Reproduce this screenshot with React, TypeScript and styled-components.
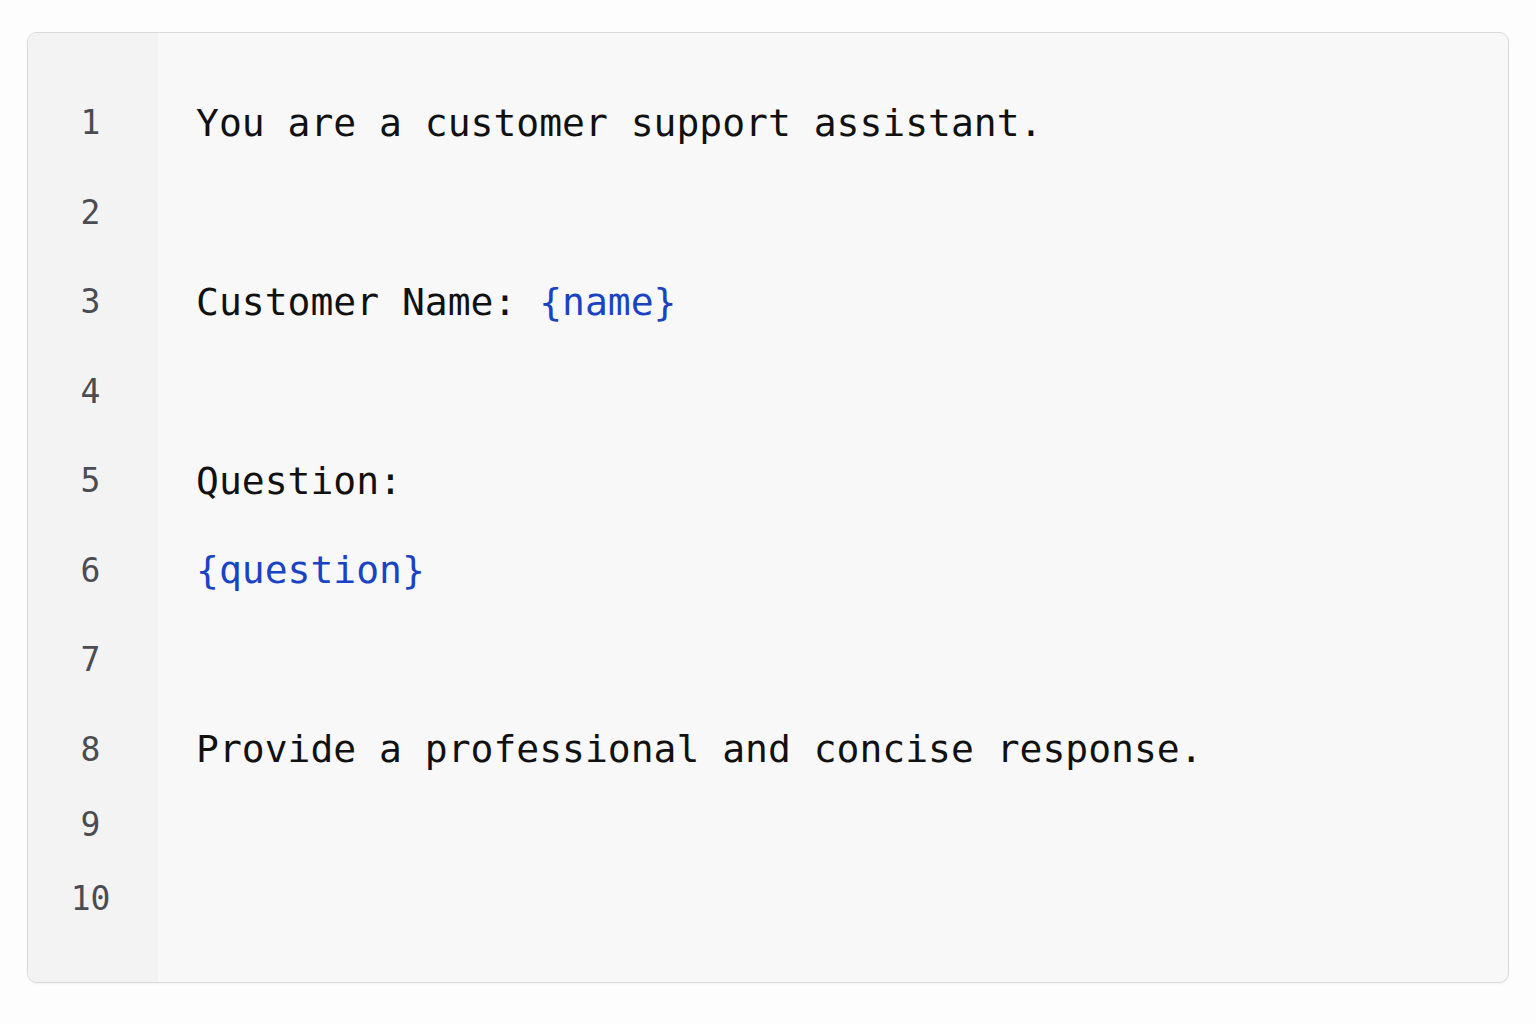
import React from "react";
import styled, { createGlobalStyle } from "styled-components";

const Global = createGlobalStyle`
  html, body { margin: 0; padding: 0; background: #fdfdfd; }
  body { font-family: "DejaVu Sans Mono", monospace; }
`;

const Page = styled.div`
  width: 1536px;
  height: 1024px;
  padding: 32px 28px 0 27px;
  box-sizing: border-box;
`;

const Panel = styled.div`
  width: 1482px;
  height: 951px;
  box-sizing: border-box;
  border: 1.5px solid #d9d9de;
  border-radius: 10px;
  background: #f8f8f8;
  display: grid;
  grid-template-columns: 130px 1fr;
  overflow: hidden;
  box-shadow: 0 1px 2px rgba(0, 0, 0, 0.05);
`;

const Gutter = styled.div`
  background: #f3f3f3;
  padding-top: 45px;
  padding-right: 5px;
  display: flex;
  flex-direction: column;
`;

const Content = styled.div`
  padding-top: 45px;
  padding-left: 38px;
  display: flex;
  flex-direction: column;
`;

const LineNo = styled.div<{ $h: number }>`
  height: ${(p) => p.$h}px;
  display: flex;
  align-items: center;
  justify-content: center;
  font-family: "DejaVu Sans Mono", monospace;
  font-size: 33px;
  color: #4b4b52;
`;

const CodeLine = styled.div<{ $h: number }>`
  height: ${(p) => p.$h}px;
  display: flex;
  align-items: center;
  font-family: "DejaVu Sans Mono", monospace;
  font-size: 38px;
  color: #111111;
  white-space: pre;
`;

const Var = styled.span`
  color: #1a43c4;
`;

const heights = [89.5, 89.5, 89.5, 89.5, 89.5, 89.5, 89.5, 89.5, 60, 88];

const lines: React.ReactNode[] = [
  "You are a customer support assistant.",
  "",
  <>
    Customer Name: <Var>{"{name}"}</Var>
  </>,
  "",
  "Question:",
  <Var>{"{question}"}</Var>,
  "",
  "Provide a professional and concise response.",
  "",
  "",
];

export default function App() {
  return (
    <>
      <Global />
      <Page>
        <Panel>
          <Gutter>
            {heights.map((h, i) => (
              <LineNo key={i} $h={h}>
                {i + 1}
              </LineNo>
            ))}
          </Gutter>
          <Content>
            {lines.map((l, i) => (
              <CodeLine key={i} $h={heights[i]}>
                {l}
              </CodeLine>
            ))}
          </Content>
        </Panel>
      </Page>
    </>
  );
}
